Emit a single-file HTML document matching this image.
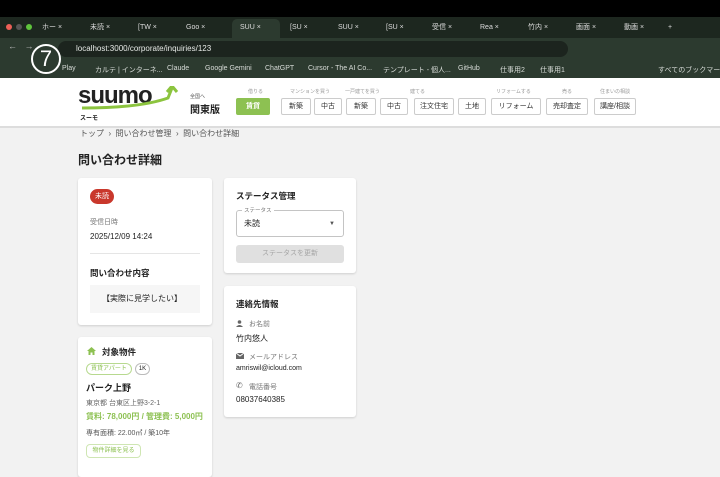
<!DOCTYPE html><html><head><meta charset="utf-8"><style>
*{box-sizing:border-box;margin:0;padding:0}
body{width:720px;height:468px;overflow:hidden;background:#f2f2f2;font-family:"Liberation Sans","Noto Sans CJK JP",sans-serif;color:#222;position:relative;white-space:nowrap}
.abs{position:absolute}
.top{left:0;top:0;width:720px;height:17px;background:#000}
.tabs{left:0;top:17px;width:720px;height:21px;background:#1d271f}
.tool{left:0;top:38px;width:720px;height:22px;background:#2c3a2f}
.bm{left:0;top:60px;width:720px;height:18px;background:#2c3a2f;font-size:7px;color:#d8dcd8}
.url{left:58px;top:41px;width:510px;height:16px;border-radius:8px;background:#1c241e;color:#e6e9e6;font-size:8px;line-height:16px;padding-left:18px}
.tab{top:21px;height:14px;font-size:7px;color:#ddd;line-height:14px}
.hdr{left:0;top:78px;width:720px;height:50px;background:#fff;border-bottom:2px solid #ddd}
.nb{position:absolute;height:17px;border:1px solid #ccc;border-radius:2px;font-size:7px;line-height:15px;text-align:center;color:#333;background:#fff}
.nl{position:absolute;font-size:5px;color:#999;top:88px}
.card{position:absolute;background:#fff;border-radius:3px;box-shadow:0 1px 2px rgba(0,0,0,.15)}
.lbl{font-size:7px;color:#777}
.v{font-size:8px;color:#222}
h3{font-size:8.5px;font-weight:bold;color:#222}
</style></head><body>
<div class="abs top"></div>
<div class="abs tabs"></div>
<div class="abs" style="left:6px;top:24px;width:6px;height:6px;border-radius:50%;background:#ec5f57"></div>
<div class="abs" style="left:16px;top:24px;width:6px;height:6px;border-radius:50%;background:#555"></div>
<div class="abs" style="left:26px;top:24px;width:6px;height:6px;border-radius:50%;background:#5fc43c"></div>
<div class="abs" style="left:232px;top:19px;width:48px;height:19px;background:#2c3a2f;border-radius:5px 5px 0 0"></div>
<div class="abs tab" style="left:42px">ホー ×</div><div class="abs tab" style="left:90px">未読 ×</div><div class="abs tab" style="left:138px">[TW ×</div><div class="abs tab" style="left:186px">Goo ×</div><div class="abs tab" style="left:240px">SUU ×</div><div class="abs tab" style="left:290px">[SU ×</div><div class="abs tab" style="left:338px">SUU ×</div><div class="abs tab" style="left:386px">[SU ×</div><div class="abs tab" style="left:432px">受信 ×</div><div class="abs tab" style="left:480px">Rea ×</div><div class="abs tab" style="left:528px">竹内 ×</div><div class="abs tab" style="left:576px">画面 ×</div><div class="abs tab" style="left:624px">動画 ×</div><div class="abs tab" style="left:668px">+</div>
<div class="abs tool"></div>
<div class="abs url">localhost:3000/corporate/inquiries/123</div>
<div class="abs" style="left:8px;top:41px;font-size:9px;color:#bbb">←&nbsp;&nbsp;&nbsp;→</div>
<div class="abs bm"><span style="position:absolute;left:62px;top:5px">Play</span><span style="position:absolute;left:95px;top:5px">カルテ | インターネ...</span><span style="position:absolute;left:167px;top:5px">Claude</span><span style="position:absolute;left:205px;top:5px">Google Gemini</span><span style="position:absolute;left:265px;top:5px">ChatGPT</span><span style="position:absolute;left:308px;top:5px">Cursor - The AI Co...</span><span style="position:absolute;left:383px;top:5px">テンプレート - 個人...</span><span style="position:absolute;left:458px;top:5px">GitHub</span><span style="position:absolute;left:500px;top:5px">仕事用2</span><span style="position:absolute;left:540px;top:5px">仕事用1</span><span style="position:absolute;left:658px;top:5px">すべてのブックマーク</span></div>
<div class="abs" style="left:31px;top:44px;width:30px;height:30px;border:2px solid #fff;border-radius:50%;color:#fff;font-size:22px;line-height:26px;text-align:center;z-index:5">7</div>
<div class="abs hdr"></div>
<div class="abs" style="left:78px;top:82px;font-size:24px;font-weight:bold;color:#222;letter-spacing:-1px">suumo</div>
<svg class="abs" style="left:80px;top:86px" width="100" height="24"><path d="M2 22 Q60 22 88 12 L92 2" stroke="#8cc43f" stroke-width="3" fill="none"/><path d="M87 6 L92 0 L97 6" stroke="#8cc43f" stroke-width="3" fill="none"/></svg>
<div class="abs" style="left:80px;top:113px;font-size:6px;font-weight:bold">スーモ</div>
<div class="abs" style="left:190px;top:93px;font-size:5px;color:#555">全国へ</div>
<div class="abs" style="left:190px;top:101px;font-size:10px;font-weight:bold">関東版</div>
<div class="abs" style="left:248px;top:88px;font-size:5px;color:#999">借りる</div>
<div class="nb" style="left:236px;top:98px;width:34px;background:#8dc152;border-color:#8dc152;color:#fff;font-weight:bold">賃貸</div>
<div class="nl" style="left:290px">マンションを買う</div><div class="nl" style="left:345px">一戸建てを買う</div><div class="nl" style="left:410px">建てる</div><div class="nl" style="left:496px">リフォームする</div><div class="nl" style="left:562px">売る</div><div class="nl" style="left:600px">住まいの相談</div>
<div class="nb" style="left:281px;top:98px;width:30px">新築</div><div class="nb" style="left:314px;top:98px;width:28px">中古</div><div class="nb" style="left:346px;top:98px;width:30px">新築</div><div class="nb" style="left:380px;top:98px;width:28px">中古</div><div class="nb" style="left:414px;top:98px;width:40px">注文住宅</div><div class="nb" style="left:458px;top:98px;width:28px">土地</div><div class="nb" style="left:491px;top:98px;width:50px">リフォーム</div><div class="nb" style="left:546px;top:98px;width:42px">売却査定</div><div class="nb" style="left:594px;top:98px;width:42px">講座/相談</div>
<div class="abs" style="left:80px;top:128px;font-size:8px;color:#555">トップ &nbsp;›&nbsp; 問い合わせ管理 &nbsp;›&nbsp; 問い合わせ詳細</div>
<div class="abs" style="left:78px;top:151px;font-size:12px;font-weight:bold">問い合わせ詳細</div>

<div class="card" style="left:78px;top:178px;width:134px;height:147px">
<div class="abs" style="left:12px;top:11px;width:24px;height:15px;border-radius:8px;background:#c9382c;color:#fff;font-size:7px;line-height:15px;text-align:center">未読</div>
<div class="abs lbl" style="left:12px;top:39px">受信日時</div>
<div class="abs v" style="left:12px;top:54px">2025/12/09 14:24</div>
<div class="abs" style="left:12px;top:75px;width:110px;height:1px;background:#e5e5e5"></div>
<div class="abs" style="left:12px;top:89px"><h3>問い合わせ内容</h3></div>
<div class="abs" style="left:12px;top:107px;width:110px;height:28px;background:#f6f6f6;font-size:8px;line-height:28px;padding-left:12px">【実際に見学したい】</div>
</div>

<div class="card" style="left:78px;top:337px;width:134px;height:140px">
<svg class="abs" style="left:9px;top:10px" width="9" height="8"><path d="M4.5 0 L9 4 H7.5 V8 H5.5 V5.5 H3.5 V8 H1.5 V4 H0 Z" fill="#8dc152"/></svg>
<div class="abs" style="left:24px;top:9px"><h3>対象物件</h3></div>
<div class="abs" style="left:8px;top:26px;width:46px;height:12px;border:1px solid #b7d98f;border-radius:6px;font-size:6px;color:#8dc152;text-align:center;line-height:10px">賃貸アパート</div>
<div class="abs" style="left:57px;top:26px;width:15px;height:12px;border:1px solid #bbb;border-radius:6px;font-size:6px;text-align:center;line-height:10px">1K</div>
<div class="abs" style="left:8px;top:44px;font-size:9px;font-weight:bold">パーク上野</div>
<div class="abs" style="left:8px;top:61px;font-size:7px;color:#666">東京都 台東区上野3-2-1</div>
<div class="abs" style="left:8px;top:74px;font-size:8px;color:#8dc152;font-weight:bold">賃料: 78,000円 / 管理費: 5,000円</div>
<div class="abs" style="left:8px;top:91px;font-size:7px;color:#555">専有面積: 22.00㎡ / 築10年</div>
<div class="abs" style="left:8px;top:107px;width:55px;height:14px;border:1px solid #cfe6b3;border-radius:4px;font-size:6px;color:#8dc152;text-align:center;line-height:12px">物件詳細を見る</div>
</div>

<div class="card" style="left:224px;top:178px;width:132px;height:95px">
<div class="abs" style="left:12px;top:12px"><h3>ステータス管理</h3></div>
<div class="abs" style="left:12px;top:32px;width:108px;height:27px;border:1px solid #c4c4c4;border-radius:3px;font-size:8px;line-height:26px;padding-left:7px">未読<span style="position:absolute;right:8px;font-size:6px;color:#555">▼</span></div>
<div class="abs" style="left:18px;top:28px;background:#fff;padding:0 2px;font-size:5.5px;color:#777">ステータス</div>
<div class="abs" style="left:12px;top:67px;width:108px;height:18px;background:#e0e0e0;border-radius:3px;font-size:7px;color:#a5a5a5;text-align:center;line-height:18px">ステータスを更新</div>
</div>

<div class="card" style="left:224px;top:286px;width:132px;height:131px">
<div class="abs" style="left:12px;top:12px"><h3>連絡先情報</h3></div>
<svg class="abs" style="left:12px;top:34px" width="7" height="7"><circle cx="3.5" cy="2" r="1.8" fill="#666"/><path d="M0 7 Q3.5 3 7 7Z" fill="#666"/></svg>
<div class="abs lbl" style="left:25px;top:33px">お名前</div>
<div class="abs v" style="left:12px;top:47px">竹内悠人</div>
<svg class="abs" style="left:12px;top:67px" width="8" height="6"><rect width="8" height="6" fill="#666"/><path d="M0 0 L4 3 L8 0" stroke="#fff" fill="none"/></svg>
<div class="abs lbl" style="left:25px;top:66px">メールアドレス</div>
<div class="abs" style="left:12px;top:79px;font-size:7px">amriswil@icloud.com</div>
<div class="abs" style="left:12px;top:95px;font-size:8px;color:#666">✆</div>
<div class="abs lbl" style="left:25px;top:96px">電話番号</div>
<div class="abs v" style="left:12px;top:109px">08037640385</div>
</div>
</body></html>
